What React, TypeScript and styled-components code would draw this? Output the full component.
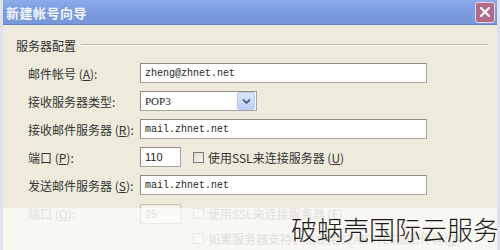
import React from "react";
import styled, { createGlobalStyle } from "styled-components";

const GlobalStyle = createGlobalStyle`
  html, body {
    margin: 0;
    padding: 0;
    background: #ffffff;
  }
`;

const Window = styled.div`
  position: relative;
  width: 500px;
  height: 250px;
  overflow: hidden;
  background: #eeebdd;
  font-family: "Noto Sans CJK SC", "Noto Sans", sans-serif;
  box-sizing: border-box;
  border-left: 3px solid #dde2ec;
  border-right: 3px solid #dde2ec;
`;

const TitleBar = styled.div`
  display: flex;
  align-items: center;
  justify-content: space-between;
  height: 24px;
  margin: 0 -3px;
  padding: 0 5px 0 6px;
  background: linear-gradient(180deg, #8eaaea 0%, #7b9be0 45%, #7896dc 100%);
  border-bottom: 1px solid #6482bd;
`;

const Title = styled.span`
  color: #f4f6fc;
  font-size: 13px;
  font-weight: 700;
  letter-spacing: 0.5px;
`;

const CloseButton = styled.div`
  display: flex;
  align-items: center;
  justify-content: center;
  width: 18px;
  height: 19px;
  border: 1px solid #e8d6e6;
  border-radius: 3px;
  background: #b16b86;
`;

const Body = styled.div`
  display: flex;
  flex-direction: column;
  padding: 12px 0 0 13px;
`;

const GroupHeader = styled.div`
  display: flex;
  align-items: center;
  gap: 5px;
  height: 16px;
  margin-bottom: 6px;
`;

const GroupTitle = styled.span`
  font-size: 12px;
  color: #2e2e2e;
  white-space: nowrap;
`;

const GroupLine = styled.div`
  flex: 1;
  height: 0;
  margin-right: 9px;
  border-top: 1px solid #bdb9aa;
  border-bottom: 1px solid #ffffff;
`;

const Row = styled.div<{ $h?: number }>`
  display: grid;
  grid-template-columns: 112px 1fr;
  align-items: center;
  height: ${(p) => p.$h ?? 28}px;
  padding-left: 12px;
`;

const Label = styled.span<{ $disabled?: boolean }>`
  font-size: 12px;
  color: ${(p) => (p.$disabled ? "#b5b1a4" : "#333333")};
  white-space: nowrap;
`;

const Key = styled.span`
  text-decoration: underline;
`;

const Fields = styled.div`
  display: flex;
  align-items: center;
  gap: 12px;
`;

const TextBox = styled.div<{ $w: number; $disabled?: boolean }>`
  display: flex;
  align-items: center;
  box-sizing: border-box;
  width: ${(p) => p.$w}px;
  height: 20px;
  padding-left: 4px;
  background: ${(p) => (p.$disabled ? "#f4f2ea" : "#ffffff")};
  border: 1px solid ${(p) => (p.$disabled ? "#cfccc2" : "#a7a59d")};
  border-top-color: ${(p) => (p.$disabled ? "#c4c1b6" : "#8e8c85")};
  border-left-color: ${(p) => (p.$disabled ? "#c4c1b6" : "#8e8c85")};
  font-family: "Liberation Mono", "DejaVu Sans Mono", monospace;
  font-size: 10px;
  color: ${(p) => (p.$disabled ? "#b8b4a8" : "#1e1e1e")};
  white-space: nowrap;
`;

const PortText = styled.span`
  font-family: "Liberation Sans", Arial, sans-serif;
  font-size: 11px;
`;

const Select = styled.div`
  display: flex;
  align-items: center;
  justify-content: space-between;
  box-sizing: border-box;
  width: 117px;
  height: 20px;
  padding: 1px 1px 1px 4px;
  background: #ffffff;
  border: 1px solid #a7a59d;
  border-top-color: #8e8c85;
  border-left-color: #8e8c85;
  font-family: "Liberation Serif", serif;
  font-size: 11px;
  color: #1e1e1e;
`;

const DropButton = styled.div`
  display: flex;
  align-items: center;
  justify-content: center;
  width: 16px;
  height: 16px;
  border: 1px solid #b9cdf4;
  border-radius: 2px;
  background: linear-gradient(180deg, #dbe6fd 0%, #bccffa 100%);
`;

const Check = styled.label<{ $disabled?: boolean }>`
  display: flex;
  align-items: center;
  gap: 4px;
  font-size: 12px;
  color: ${(p) => (p.$disabled ? "#b5b1a4" : "#333333")};
  white-space: nowrap;
`;

const Box = styled.span<{ $disabled?: boolean }>`
  display: inline-block;
  box-sizing: border-box;
  width: 11px;
  height: 11px;
  border: 1px solid ${(p) => (p.$disabled ? "#cbc8be" : "#7d7c78")};
  background: ${(p) =>
    p.$disabled ? "#f2f0e8" : "linear-gradient(135deg, #dcdbd3 0%, #f6f5ef 100%)"};
`;

const Spacer = styled.span``;

const Haze = styled.div`
  position: absolute;
  left: -3px;
  right: -3px;
  top: 208px;
  bottom: 0;
  background: rgba(255, 255, 255, 0.58);
`;

const Watermark = styled.div`
  position: absolute;
  right: -2px;
  top: 216px;
  font-family: "Noto Sans CJK SC", sans-serif;
  font-size: 26px;
  font-weight: 300;
  line-height: 1;
  color: #1c1c1c;
  white-space: nowrap;
`;

const App = () => {
  return (
    <>
      <GlobalStyle />
      <Window>
        <TitleBar>
          <Title>新建帐号向导</Title>
          <CloseButton>
            <svg width="12" height="12" viewBox="0 0 12 12">
              <path d="M2 2 L10 10 M10 2 L2 10" stroke="#ffffff" strokeWidth="2.2" strokeLinecap="round" />
            </svg>
          </CloseButton>
        </TitleBar>
        <Body>
          <GroupHeader>
            <GroupTitle>服务器配置</GroupTitle>
            <GroupLine />
          </GroupHeader>
          <Row>
            <Label>邮件帐号 (<Key>A</Key>):</Label>
            <TextBox $w={287}>zheng@zhnet.net</TextBox>
          </Row>
          <Row>
            <Label>接收服务器类型:</Label>
            <Select>
              POP3
              <DropButton>
                <svg width="9" height="7" viewBox="0 0 9 7">
                  <path d="M1 1.5 L4.5 5 L8 1.5" fill="none" stroke="#4d6185" strokeWidth="1.8" />
                </svg>
              </DropButton>
            </Select>
          </Row>
          <Row>
            <Label>接收邮件服务器 (<Key>R</Key>):</Label>
            <TextBox $w={287}>mail.zhnet.net</TextBox>
          </Row>
          <Row>
            <Label>端口 (<Key>P</Key>):</Label>
            <Fields>
              <TextBox $w={41}><PortText>110</PortText></TextBox>
              <Check>
                <Box />
                <span>使用SSL来连接服务器 (<Key>U</Key>)</span>
              </Check>
            </Fields>
          </Row>
          <Row>
            <Label>发送邮件服务器 (<Key>S</Key>):</Label>
            <TextBox $w={287}>mail.zhnet.net</TextBox>
          </Row>
          <Row $h={29}>
            <Label $disabled>端口 (<Key>O</Key>):</Label>
            <Fields>
              <TextBox $w={41} $disabled><PortText>25</PortText></TextBox>
              <Check $disabled>
                <Box $disabled />
                <span>使用SSL来连接服务器 (<Key>E</Key>)</span>
              </Check>
            </Fields>
          </Row>
          <Row $h={20}>
            <Spacer />
            <Fields>
              <Spacer style={{ width: 41 }} />
              <Check $disabled>
                <Box $disabled />
                <span>如果服务器支持，就使用STARTTLS加密传输(<Key>Q</Key>)</span>
              </Check>
            </Fields>
          </Row>
        </Body>
        <Haze />
        <Watermark>破蜗壳国际云服务</Watermark>
      </Window>
    </>
  );
};

export default App;
